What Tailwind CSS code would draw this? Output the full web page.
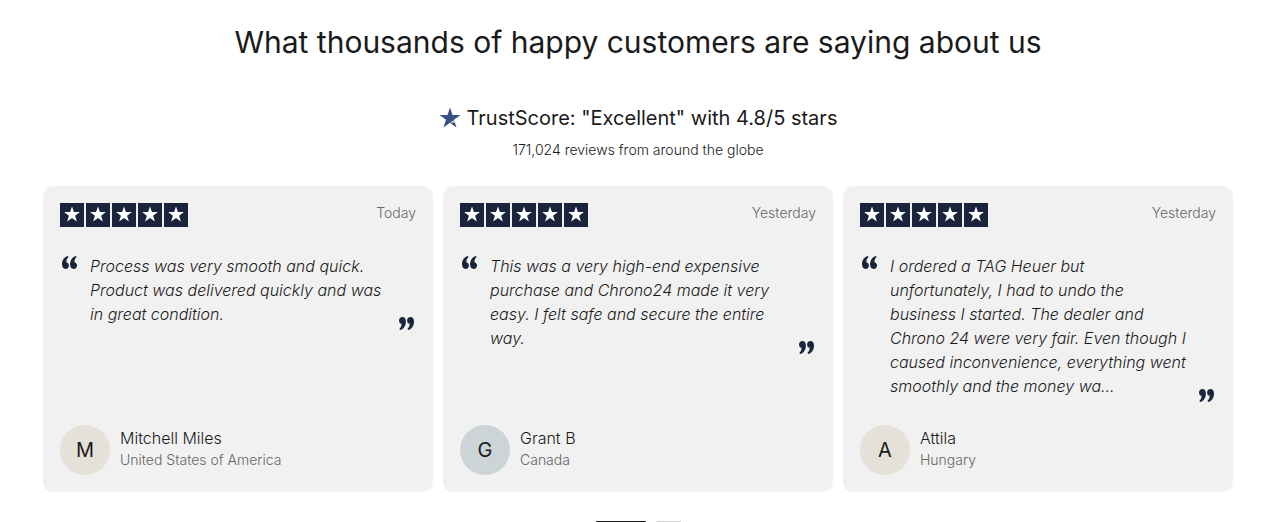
<!DOCTYPE html>
<html lang="en">
<head>
<meta charset="utf-8">
<meta name="viewport" content="width=device-width, initial-scale=1">
<title>Customer reviews</title>
<script src="https://cdn.jsdelivr.net/npm/@tailwindcss/browser@4"></script>
</head>
<body class="bg-white font-['Inter','Liberation_Sans',sans-serif] font-light text-[#1a1a1a]">
<svg class="hidden" aria-hidden="true">
  <symbol id="rating" viewBox="0 0 128 24">
    <path fill="#1a253d" d="M0 0h24v24H0zM26 0h24v24H26zM52 0h24v24H52zM78 0h24v24H78zM104 0h24v24h-24z"/>
    <g fill="#fff">
      <path id="st" d="M12 3.5l1.900 5.600h6l-4.800 3.600 1.800 5.800L12 15l-4.900 3.500 1.800-5.800L4.100 9.100h6z"/>
      <use href="#st" x="26"/><use href="#st" x="52"/><use href="#st" x="78"/><use href="#st" x="104"/>
    </g>
  </symbol>
  <symbol id="open" viewBox="0 0 15 13">
    <path fill="#1a253d" d="M5.600 0C2.200 1 0 4.400 0 8.600 0 11.400 1.400 13 3.500 13c2 0 3.400-1.400 3.400-3.400 0-1.700-.9-3-2.500-3.300C4.300 4.200 5 2.500 6.600 1.100zM13.700 0C10.300 1 8.100 4.400 8.100 8.600c0 2.800 1.400 4.400 3.500 4.400 2 0 3.400-1.400 3.400-3.400 0-1.700-.9-3-2.500-3.300-.1-2.100.6-3.800 2.200-5.200z"/>
  </symbol>
</svg>
<main class="flex flex-col pl-[43px] pr-[54px] pt-6">
  <h2 class="text-center text-[30px] leading-9 font-normal">What thousands of happy customers are saying about us</h2>
  <div class="mt-11 flex items-center justify-center gap-[6px]">
    <svg class="h-[22px] w-[22px]" viewBox="0 0 22 22" aria-hidden="true"><path fill="#374f84" d="M11 .5l2.500 7.500h8l-6.500 4.700 2.500 7.900L11 15.800 4.500 20.600 7 12.700.5 8h8z"/><path fill="#fff" d="M11 15.800l4.200-2.600.7 2.100z"/></svg>
    <p class="text-[20px] leading-7 font-normal">TrustScore: "Excellent" with 4.8/5 stars</p>
  </div>
  <p class="mt-2 text-center text-[14px] leading-5">171,024 reviews from around the globe</p>

  <section class="mt-[26px] grid grid-cols-3 gap-[10px]" aria-label="Reviews">
    <article class="flex flex-col rounded-[10px] bg-[#f1f1f1] p-[17px]">
      <div class="flex items-start justify-between">
        <svg class="h-6 w-32" role="img" aria-label="5 out of 5 stars"><use href="#rating"/></svg>
        <time class="text-[14px] leading-5 text-[#666]">Today</time>
      </div>
      <blockquote class="mt-[27px] mb-[23px] flex">
        <svg class="mt-[2px] ml-[2px] mr-[13px] h-[13px] w-[15px] shrink-0" aria-hidden="true"><use href="#open"/></svg>
        <p class="flex-1 pb-1 text-[16px] leading-6 italic">Process was very smooth and quick.<br>Product was delivered quickly and was<br>in great condition.</p>
        <svg class="mr-[2px] ml-2 h-[13px] w-[15px] shrink-0 rotate-180 self-end" aria-hidden="true"><use href="#open"/></svg>
      </blockquote>
      <footer class="mt-auto flex items-center gap-[10px]">
        <span class="flex size-[50px] items-center justify-center rounded-full bg-[#e5e0d8] text-[20px] font-normal">M</span>
        <div class="pb-[3px]">
          <p class="text-[16px] leading-[22px]">Mitchell Miles</p>
          <p class="text-[14px] leading-[22px] text-[#666]">United States of America</p>
        </div>
      </footer>
    </article>
    <article class="flex flex-col rounded-[10px] bg-[#f1f1f1] p-[17px]">
      <div class="flex items-start justify-between">
        <svg class="h-6 w-32" role="img" aria-label="5 out of 5 stars"><use href="#rating"/></svg>
        <time class="text-[14px] leading-5 text-[#666]">Yesterday</time>
      </div>
      <blockquote class="mt-[27px] mb-[23px] flex">
        <svg class="mt-[2px] ml-[2px] mr-[13px] h-[13px] w-[15px] shrink-0" aria-hidden="true"><use href="#open"/></svg>
        <p class="flex-1 pb-1 text-[16px] leading-6 italic">This was a very high-end expensive<br>purchase and Chrono24 made it very<br>easy. I felt safe and secure the entire<br>way.</p>
        <svg class="mr-[2px] ml-2 h-[13px] w-[15px] shrink-0 rotate-180 self-end" aria-hidden="true"><use href="#open"/></svg>
      </blockquote>
      <footer class="mt-auto flex items-center gap-[10px]">
        <span class="flex size-[50px] items-center justify-center rounded-full bg-[#ccd4d8] text-[20px] font-normal">G</span>
        <div class="pb-[3px]">
          <p class="text-[16px] leading-[22px]">Grant B</p>
          <p class="text-[14px] leading-[22px] text-[#666]">Canada</p>
        </div>
      </footer>
    </article>
    <article class="flex flex-col rounded-[10px] bg-[#f1f1f1] p-[17px]">
      <div class="flex items-start justify-between">
        <svg class="h-6 w-32" role="img" aria-label="5 out of 5 stars"><use href="#rating"/></svg>
        <time class="text-[14px] leading-5 text-[#666]">Yesterday</time>
      </div>
      <blockquote class="mt-[27px] mb-[23px] flex">
        <svg class="mt-[2px] ml-[2px] mr-[13px] h-[13px] w-[15px] shrink-0" aria-hidden="true"><use href="#open"/></svg>
        <p class="flex-1 pb-1 text-[16px] leading-6 italic">I ordered a TAG Heuer but<br>unfortunately, I had to undo the<br>business I started. The dealer and<br>Chrono 24 were very fair. Even though I<br>caused inconvenience, everything went<br>smoothly and the money wa...</p>
        <svg class="mr-[2px] ml-2 h-[13px] w-[15px] shrink-0 rotate-180 self-end" aria-hidden="true"><use href="#open"/></svg>
      </blockquote>
      <footer class="mt-auto flex items-center gap-[10px]">
        <span class="flex size-[50px] items-center justify-center rounded-full bg-[#e5e0d8] text-[20px] font-normal">A</span>
        <div class="pb-[3px]">
          <p class="text-[16px] leading-[22px]">Attila</p>
          <p class="text-[14px] leading-[22px] text-[#666]">Hungary</p>
        </div>
      </footer>
    </article>
  </section>

  <nav class="mt-[29px] flex justify-center gap-[10px]" aria-label="Review pages">
    <button class="h-1 w-[50px] rounded-[1px] bg-[#1a1a1a]" aria-label="Page 1"></button>
    <button class="h-1 w-[25px] rounded-[1px] bg-[#ccc]" aria-label="Page 2"></button>
  </nav>
</main>
</body>
</html>
